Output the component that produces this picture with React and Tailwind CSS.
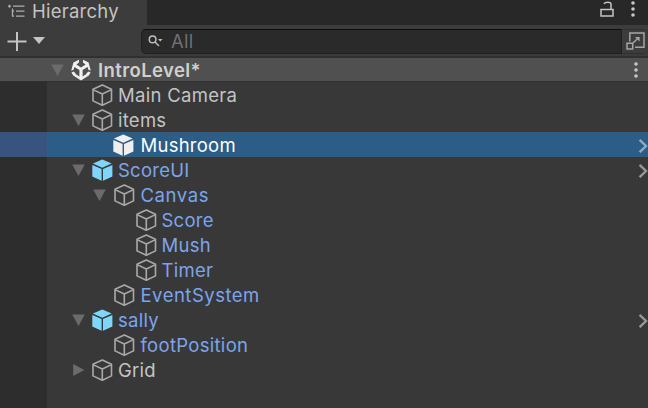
import React from "react";

function Cube({ kind }) {
  if (kind === "outline") {
    return (
      <svg className="h-[22px] w-[22px] shrink-0" viewBox="0 0 22 22" fill="none" stroke="#a9a9a9" strokeWidth="1.6" strokeLinejoin="round">
        <path d="M11.3 1 L20.5 5.3 V16.9 L11.3 21.3 L2 16.9 V5.3 Z" />
        <path d="M2 5.6 L11.3 10 L20.5 5.6 M11.3 10 V21" />
      </svg>
    );
  }
  const fill = kind === "white" ? "#efefef" : "#7fd6fd";
  return (
    <svg className="h-[22px] w-[22px] shrink-0" viewBox="0 0 22 22" fill={fill}>
      <path d="M11.3 0.5 L20.7 4.6 L11.3 8.8 L1.9 4.6 Z" />
      <path d="M1.3 5.9 L10.6 10.1 V21.8 L1.3 17.4 Z" />
      <path d="M21.4 5.9 L12 10.1 V21.8 L21.4 17.4 Z" />
    </svg>
  );
}

function Arrow({ open }) {
  return (
    <svg className="ml-[0.5px] h-3 w-[13px] shrink-0" viewBox="0 0 13 12" fill="#6b6b6b">
      {open ? <path d="M0.2 0.6 H12.8 L6.5 12 Z" /> : <path d="M1.2 0 L12.3 6 L1.2 12 Z" />}
    </svg>
  );
}

function Dots() {
  return (
    <svg className="h-4 w-1.5 shrink-0" viewBox="0 0 6 16" fill="#c8c8c8">
      <circle cx="3" cy="2" r="1.8" />
      <circle cx="3" cy="8" r="1.8" />
      <circle cx="3" cy="14" r="1.8" />
    </svg>
  );
}

function SceneIcon() {
  return (
    <svg className="h-[22px] w-[22px] shrink-0" viewBox="0 0 22 22" fill="#f0f0f0">
      <path d="M9 0.8 V3.6 L6.4 5.4 L11 8.4 L15.6 5.4 L13 3.6 V0.8 L18.6 3.4 L20.8 11.8 L18.4 10.8 L17.6 8 L12.6 11 V17.4 L15.6 15.6 L18.8 16.4 L11 21.6 L3.2 16.4 L6.4 15.6 L9.4 17.4 V11 L4.4 8 L3.6 10.8 L1.2 11.8 L3.4 3.4 Z" />
      <path d="M1.4 13.4 L3.8 12.6 L6.4 15.4 L3.4 16.8 Z M20.6 13.4 L18.2 12.6 L15.6 15.4 L18.6 16.8 Z" />
    </svg>
  );
}

const rows = [
  { name: "Main Camera", pad: "pl-[24px]", icon: "outline", color: "text-[#c4c4c4]", gap: "ml-[5px] tracking-[0.3px]" },
  { name: "items", pad: "pl-[24px]", icon: "outline", color: "text-[#c4c4c4]", arrow: "open" },
  { name: "Mushroom", pad: "pl-[45px]", icon: "white", color: "text-white", selected: true, chevron: true, gap: "ml-[6.5px] tracking-[0.25px]" },
  { name: "ScoreUI", pad: "pl-[24px]", icon: "blue", color: "text-[#7ba5ed]", arrow: "open", chevron: true },
  { name: "Canvas", pad: "pl-[45.5px]", icon: "outline", color: "text-[#7ba5ed]", arrow: "open", gap: "ml-[6px] tracking-[0.6px]" },
  { name: "Score", pad: "pl-[67.5px]", icon: "outline", color: "text-[#7ba5ed]" },
  { name: "Mush", pad: "pl-[67.5px]", icon: "outline", color: "text-[#7ba5ed]" },
  { name: "Timer", pad: "pl-[67.5px]", icon: "outline", color: "text-[#7ba5ed]" },
  { name: "EventSystem", pad: "pl-[45.5px]", icon: "outline", color: "text-[#7ba5ed]", gap: "ml-[6px] tracking-[0.5px]" },
  { name: "sally", pad: "pl-[24px]", icon: "blue", color: "text-[#7ba5ed]", arrow: "open", chevron: true },
  { name: "footPosition", pad: "pl-[45.5px]", icon: "outline", color: "text-[#7ba5ed]", gap: "ml-[6px] tracking-[0.3px]" },
  { name: "Grid", pad: "pl-[24px]", icon: "outline", color: "text-[#c4c4c4]", arrow: "closed" },
];

function Row({ row }) {
  return (
    <div className="flex h-[25px] shrink-0">
      <div className={`w-[47px] shrink-0 ${row.selected ? "bg-[#37537e]" : ""}`} />
      <div className={`flex min-w-0 flex-1 items-center pt-px ${row.pad} ${row.selected ? "bg-[#2c5d87]" : ""}`}>
        <div className="w-[20px] shrink-0">{row.arrow && <Arrow open={row.arrow === "open"} />}</div>
        <Cube kind={row.icon} />
        <span className={`flex-1 whitespace-nowrap ${row.gap || "ml-[5px] tracking-[0.25px]"} ${row.color}`}>{row.name}</span>
        {row.chevron && (
          <svg className="h-4 w-[10px] shrink-0" viewBox="0 0 10 16" fill="none" stroke={row.selected ? "#90a9bf" : "#979797"} strokeWidth="2.4">
            <path d="M1.6 2.8 L8 9 L1.6 15.2" />
          </svg>
        )}
      </div>
    </div>
  );
}

export default function App() {
  return (
    <div className="flex h-[408px] w-[648px] flex-col overflow-hidden bg-[#383838] font-['Inter',sans-serif] text-[18.5px] leading-6 tracking-[0.25px] text-[#c4c4c4]">
      <div className="flex h-[25px] shrink-0 bg-[#282828]">
        <div className="flex w-[147px] items-center bg-[#3c3c3c] pb-[3px] pl-2">
          <svg className="h-[15px] w-[17px]" viewBox="0 0 17 15" fill="none" stroke="#adadad" strokeWidth="1.3">
            <path d="M0 2.2 H3 M1.5 .7 V3.7 M5 2.2 H16.5 M4.5 4.5 V12.5 M4 7.2 H6 M8 7.2 H16.5 M4 12.2 H6 M8 12.2 H16.5" />
          </svg>
          <span className="ml-[7px]">Hierarchy</span>
        </div>
        <div className="flex flex-1 items-center justify-end pb-[7px] pr-3">
          <svg className="mr-[16px] h-4 w-[14px]" viewBox="0 0 14 16" fill="none" stroke="#c4c4c4" strokeWidth="1.5">
            <path d="M1 8.6 H13 V15 H1 Z M4 2.8 C5 .8 11 .4 11 3.2 V8.6" />
          </svg>
          <Dots />
        </div>
      </div>

      <div className="flex h-[31px] shrink-0 items-center bg-[#3c3c3c] pl-[7px]">
        <svg className="h-5 w-5" viewBox="0 0 20 20" stroke="#c4c4c4" strokeWidth="2">
          <path d="M0.5 10.5 H19.5 M10 1 V20" />
        </svg>
        <svg className="ml-[6px] h-[7px] w-3" viewBox="0 0 12 7" fill="#c4c4c4">
          <path d="M0 0 H12 L6 7 Z" />
        </svg>
        <div className="ml-[96px] mt-px flex h-[25px] w-[481px] items-center rounded-l-[5px] border border-[#202020] border-t-[#0d0d0d] bg-[#2a2a2a] pl-[6px]">
          <svg className="h-3 w-[15px]" viewBox="0 0 15 12" fill="none" stroke="#bdbdbd" strokeWidth="1.5">
            <circle cx="4.6" cy="4.4" r="3.3" />
            <path d="M7 7 L11 11" />
            <path d="M10 4 H14.6 L12.3 6.6 Z" fill="#bdbdbd" stroke="none" />
          </svg>
          <span className="ml-[8px] text-[#6f6f6f]">All</span>
        </div>
        <div className="mt-px flex h-[25px] flex-1 items-center rounded-r-[5px] border-y border-[#303030] bg-[#3c3c3c] pl-[4px]">
          <svg className="h-[18px] w-[19px] shrink-0" viewBox="0 0 19 18" fill="none" stroke="#a5a5a5" strokeWidth="1.5">
            <path d="M3.8 9.5 V1 H18 V15.3 H9" />
            <path d="M1 11.2 H6.7 V17 H1 Z M6.7 11.2 L12 6.3" />
            <path d="M9 5 H13.6 V9.6 Z" fill="#a5a5a5" stroke="none" />
          </svg>
        </div>
      </div>

      <div className="flex h-[26px] shrink-0 items-center border-b border-t-2 border-b-[#303030] border-t-[#303030] bg-[#505050] pl-[50px] pr-[9px]">
        <Arrow open />
        <div className="ml-[6.5px] flex">
          <SceneIcon />
        </div>
        <span className="ml-[6px] flex-1 font-semibold tracking-[0.4px] text-[#d0d0d0]">IntroLevel*</span>
        <Dots />
      </div>

      <div className="flex flex-1 flex-col bg-[linear-gradient(to_right,#2d2d2d_47px,#383838_47px)]">
        {rows.map((row) => (
          <Row key={row.name} row={row} />
        ))}
      </div>
    </div>
  );
}
